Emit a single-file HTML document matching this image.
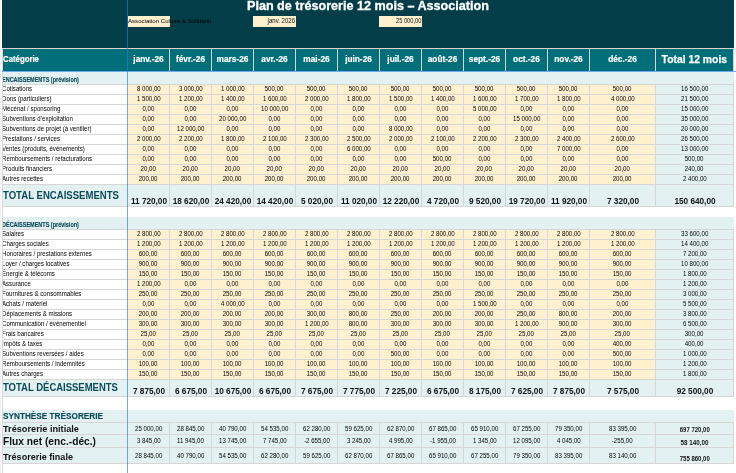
<!DOCTYPE html>
<html><head><meta charset="utf-8"><style>
html,body{margin:0;padding:0;width:736px;height:473px;overflow:hidden;background:#fff}
body{position:relative;font-family:"Liberation Sans",sans-serif}
body div{position:absolute}
.t{white-space:nowrap}
#w{left:0;top:0;width:736px;height:473px;will-change:transform}
</style></head><body><div id="w">
<div style="left:0px;top:0px;width:1px;height:473px;background:#f2f3f6;"></div><div style="left:1px;top:0px;width:1px;height:473px;background:#ffffff;"></div><div style="left:2px;top:0px;width:732px;height:48px;background:#023d48;"></div><div style="left:2px;top:48px;width:732px;height:1px;background:#d9d4d0;"></div><div style="left:2px;top:49px;width:732px;height:22px;background:#006f79;"></div><div style="left:169px;top:49px;width:1px;height:22px;background:#d9d4d0;"></div><div style="left:211px;top:49px;width:1px;height:22px;background:#d9d4d0;"></div><div style="left:253px;top:49px;width:1px;height:22px;background:#d9d4d0;"></div><div style="left:295px;top:49px;width:1px;height:22px;background:#d9d4d0;"></div><div style="left:337px;top:49px;width:1px;height:22px;background:#d9d4d0;"></div><div style="left:379px;top:49px;width:1px;height:22px;background:#d9d4d0;"></div><div style="left:421px;top:49px;width:1px;height:22px;background:#d9d4d0;"></div><div style="left:463px;top:49px;width:1px;height:22px;background:#d9d4d0;"></div><div style="left:505px;top:49px;width:1px;height:22px;background:#d9d4d0;"></div><div style="left:547px;top:49px;width:1px;height:22px;background:#d9d4d0;"></div><div style="left:589px;top:49px;width:1px;height:22px;background:#d9d4d0;"></div><div style="left:655px;top:49px;width:1px;height:22px;background:#d9d4d0;"></div><div style="left:2px;top:49px;width:1px;height:22px;background:#d9d4d0;"></div><div style="left:733px;top:49px;width:1px;height:22px;background:#d9d4d0;"></div><div style="left:2px;top:72px;width:732px;height:12px;background:#e4f1f3;"></div><div style="left:2px;top:84px;width:732px;height:1px;background:#d6d6d6;"></div><div style="left:3px;top:85px;width:124px;height:9px;background:#ffffff;"></div><div style="left:128px;top:85px;width:527px;height:9px;background:#fff1cf;"></div><div style="left:656px;top:85px;width:77px;height:9px;background:#e4f1f3;"></div><div style="left:2px;top:94px;width:732px;height:1px;background:#d6d6d6;"></div><div style="left:3px;top:95px;width:124px;height:9px;background:#ffffff;"></div><div style="left:128px;top:95px;width:527px;height:9px;background:#fff1cf;"></div><div style="left:656px;top:95px;width:77px;height:9px;background:#e4f1f3;"></div><div style="left:2px;top:104px;width:732px;height:1px;background:#d6d6d6;"></div><div style="left:3px;top:105px;width:124px;height:9px;background:#ffffff;"></div><div style="left:128px;top:105px;width:527px;height:9px;background:#fff1cf;"></div><div style="left:656px;top:105px;width:77px;height:9px;background:#e4f1f3;"></div><div style="left:2px;top:114px;width:732px;height:1px;background:#d6d6d6;"></div><div style="left:3px;top:115px;width:124px;height:9px;background:#ffffff;"></div><div style="left:128px;top:115px;width:527px;height:9px;background:#fff1cf;"></div><div style="left:656px;top:115px;width:77px;height:9px;background:#e4f1f3;"></div><div style="left:2px;top:124px;width:732px;height:1px;background:#d6d6d6;"></div><div style="left:3px;top:125px;width:124px;height:9px;background:#ffffff;"></div><div style="left:128px;top:125px;width:527px;height:9px;background:#fff1cf;"></div><div style="left:656px;top:125px;width:77px;height:9px;background:#e4f1f3;"></div><div style="left:2px;top:134px;width:732px;height:1px;background:#d6d6d6;"></div><div style="left:3px;top:135px;width:124px;height:9px;background:#ffffff;"></div><div style="left:128px;top:135px;width:527px;height:9px;background:#fff1cf;"></div><div style="left:656px;top:135px;width:77px;height:9px;background:#e4f1f3;"></div><div style="left:2px;top:144px;width:732px;height:1px;background:#d6d6d6;"></div><div style="left:3px;top:145px;width:124px;height:9px;background:#ffffff;"></div><div style="left:128px;top:145px;width:527px;height:9px;background:#fff1cf;"></div><div style="left:656px;top:145px;width:77px;height:9px;background:#e4f1f3;"></div><div style="left:2px;top:154px;width:732px;height:1px;background:#d6d6d6;"></div><div style="left:3px;top:155px;width:124px;height:9px;background:#ffffff;"></div><div style="left:128px;top:155px;width:527px;height:9px;background:#fff1cf;"></div><div style="left:656px;top:155px;width:77px;height:9px;background:#e4f1f3;"></div><div style="left:2px;top:164px;width:732px;height:1px;background:#d6d6d6;"></div><div style="left:3px;top:165px;width:124px;height:9px;background:#ffffff;"></div><div style="left:128px;top:165px;width:527px;height:9px;background:#fff1cf;"></div><div style="left:656px;top:165px;width:77px;height:9px;background:#e4f1f3;"></div><div style="left:2px;top:174px;width:732px;height:1px;background:#d6d6d6;"></div><div style="left:3px;top:175px;width:124px;height:9px;background:#ffffff;"></div><div style="left:128px;top:175px;width:527px;height:9px;background:#fff1cf;"></div><div style="left:656px;top:175px;width:77px;height:9px;background:#e4f1f3;"></div><div style="left:2px;top:184px;width:732px;height:1px;background:#d6d6d6;"></div><div style="left:169px;top:85px;width:1px;height:100px;background:#d6d6d6;"></div><div style="left:211px;top:85px;width:1px;height:100px;background:#d6d6d6;"></div><div style="left:253px;top:85px;width:1px;height:100px;background:#d6d6d6;"></div><div style="left:295px;top:85px;width:1px;height:100px;background:#d6d6d6;"></div><div style="left:337px;top:85px;width:1px;height:100px;background:#d6d6d6;"></div><div style="left:379px;top:85px;width:1px;height:100px;background:#d6d6d6;"></div><div style="left:421px;top:85px;width:1px;height:100px;background:#d6d6d6;"></div><div style="left:463px;top:85px;width:1px;height:100px;background:#d6d6d6;"></div><div style="left:505px;top:85px;width:1px;height:100px;background:#d6d6d6;"></div><div style="left:547px;top:85px;width:1px;height:100px;background:#d6d6d6;"></div><div style="left:589px;top:85px;width:1px;height:100px;background:#d6d6d6;"></div><div style="left:655px;top:85px;width:1px;height:100px;background:#d6d6d6;"></div><div style="left:733px;top:85px;width:1px;height:100px;background:#d6d6d6;"></div><div style="left:2px;top:84px;width:1px;height:101px;background:#d6d6d6;"></div><div style="left:2px;top:185px;width:732px;height:21px;background:#e4f1f3;"></div><div style="left:2px;top:206px;width:732px;height:1px;background:#d6d6d6;"></div><div style="left:169px;top:185px;width:1px;height:21px;background:#d6d6d6;"></div><div style="left:211px;top:185px;width:1px;height:21px;background:#d6d6d6;"></div><div style="left:253px;top:185px;width:1px;height:21px;background:#d6d6d6;"></div><div style="left:295px;top:185px;width:1px;height:21px;background:#d6d6d6;"></div><div style="left:337px;top:185px;width:1px;height:21px;background:#d6d6d6;"></div><div style="left:379px;top:185px;width:1px;height:21px;background:#d6d6d6;"></div><div style="left:421px;top:185px;width:1px;height:21px;background:#d6d6d6;"></div><div style="left:463px;top:185px;width:1px;height:21px;background:#d6d6d6;"></div><div style="left:505px;top:185px;width:1px;height:21px;background:#d6d6d6;"></div><div style="left:547px;top:185px;width:1px;height:21px;background:#d6d6d6;"></div><div style="left:589px;top:185px;width:1px;height:21px;background:#d6d6d6;"></div><div style="left:655px;top:185px;width:1px;height:21px;background:#d6d6d6;"></div><div style="left:733px;top:185px;width:1px;height:21px;background:#d6d6d6;"></div><div style="left:2px;top:185px;width:1px;height:21px;background:#d6d6d6;"></div><div style="left:2px;top:207px;width:1px;height:10px;background:#d6d6d6;"></div><div style="left:2px;top:217px;width:732px;height:12px;background:#e4f1f3;"></div><div style="left:2px;top:229px;width:732px;height:1px;background:#d6d6d6;"></div><div style="left:3px;top:230px;width:124px;height:9px;background:#ffffff;"></div><div style="left:128px;top:230px;width:527px;height:9px;background:#fff1cf;"></div><div style="left:656px;top:230px;width:77px;height:9px;background:#e4f1f3;"></div><div style="left:2px;top:239px;width:732px;height:1px;background:#d6d6d6;"></div><div style="left:3px;top:240px;width:124px;height:9px;background:#ffffff;"></div><div style="left:128px;top:240px;width:527px;height:9px;background:#fff1cf;"></div><div style="left:656px;top:240px;width:77px;height:9px;background:#e4f1f3;"></div><div style="left:2px;top:249px;width:732px;height:1px;background:#d6d6d6;"></div><div style="left:3px;top:250px;width:124px;height:9px;background:#ffffff;"></div><div style="left:128px;top:250px;width:527px;height:9px;background:#fff1cf;"></div><div style="left:656px;top:250px;width:77px;height:9px;background:#e4f1f3;"></div><div style="left:2px;top:259px;width:732px;height:1px;background:#d6d6d6;"></div><div style="left:3px;top:260px;width:124px;height:9px;background:#ffffff;"></div><div style="left:128px;top:260px;width:527px;height:9px;background:#fff1cf;"></div><div style="left:656px;top:260px;width:77px;height:9px;background:#e4f1f3;"></div><div style="left:2px;top:269px;width:732px;height:1px;background:#d6d6d6;"></div><div style="left:3px;top:270px;width:124px;height:9px;background:#ffffff;"></div><div style="left:128px;top:270px;width:527px;height:9px;background:#fff1cf;"></div><div style="left:656px;top:270px;width:77px;height:9px;background:#e4f1f3;"></div><div style="left:2px;top:279px;width:732px;height:1px;background:#d6d6d6;"></div><div style="left:3px;top:280px;width:124px;height:9px;background:#ffffff;"></div><div style="left:128px;top:280px;width:527px;height:9px;background:#fff1cf;"></div><div style="left:656px;top:280px;width:77px;height:9px;background:#e4f1f3;"></div><div style="left:2px;top:289px;width:732px;height:1px;background:#d6d6d6;"></div><div style="left:3px;top:290px;width:124px;height:9px;background:#ffffff;"></div><div style="left:128px;top:290px;width:527px;height:9px;background:#fff1cf;"></div><div style="left:656px;top:290px;width:77px;height:9px;background:#e4f1f3;"></div><div style="left:2px;top:299px;width:732px;height:1px;background:#d6d6d6;"></div><div style="left:3px;top:300px;width:124px;height:9px;background:#ffffff;"></div><div style="left:128px;top:300px;width:527px;height:9px;background:#fff1cf;"></div><div style="left:656px;top:300px;width:77px;height:9px;background:#e4f1f3;"></div><div style="left:2px;top:309px;width:732px;height:1px;background:#d6d6d6;"></div><div style="left:3px;top:310px;width:124px;height:9px;background:#ffffff;"></div><div style="left:128px;top:310px;width:527px;height:9px;background:#fff1cf;"></div><div style="left:656px;top:310px;width:77px;height:9px;background:#e4f1f3;"></div><div style="left:2px;top:319px;width:732px;height:1px;background:#d6d6d6;"></div><div style="left:3px;top:320px;width:124px;height:9px;background:#ffffff;"></div><div style="left:128px;top:320px;width:527px;height:9px;background:#fff1cf;"></div><div style="left:656px;top:320px;width:77px;height:9px;background:#e4f1f3;"></div><div style="left:2px;top:329px;width:732px;height:1px;background:#d6d6d6;"></div><div style="left:3px;top:330px;width:124px;height:9px;background:#ffffff;"></div><div style="left:128px;top:330px;width:527px;height:9px;background:#fff1cf;"></div><div style="left:656px;top:330px;width:77px;height:9px;background:#e4f1f3;"></div><div style="left:2px;top:339px;width:732px;height:1px;background:#d6d6d6;"></div><div style="left:3px;top:340px;width:124px;height:9px;background:#ffffff;"></div><div style="left:128px;top:340px;width:527px;height:9px;background:#fff1cf;"></div><div style="left:656px;top:340px;width:77px;height:9px;background:#e4f1f3;"></div><div style="left:2px;top:349px;width:732px;height:1px;background:#d6d6d6;"></div><div style="left:3px;top:350px;width:124px;height:9px;background:#ffffff;"></div><div style="left:128px;top:350px;width:527px;height:9px;background:#fff1cf;"></div><div style="left:656px;top:350px;width:77px;height:9px;background:#e4f1f3;"></div><div style="left:2px;top:359px;width:732px;height:1px;background:#d6d6d6;"></div><div style="left:3px;top:360px;width:124px;height:9px;background:#ffffff;"></div><div style="left:128px;top:360px;width:527px;height:9px;background:#fff1cf;"></div><div style="left:656px;top:360px;width:77px;height:9px;background:#e4f1f3;"></div><div style="left:2px;top:369px;width:732px;height:1px;background:#d6d6d6;"></div><div style="left:3px;top:370px;width:124px;height:9px;background:#ffffff;"></div><div style="left:128px;top:370px;width:527px;height:9px;background:#fff1cf;"></div><div style="left:656px;top:370px;width:77px;height:9px;background:#e4f1f3;"></div><div style="left:2px;top:379px;width:732px;height:1px;background:#d6d6d6;"></div><div style="left:169px;top:230px;width:1px;height:150px;background:#d6d6d6;"></div><div style="left:211px;top:230px;width:1px;height:150px;background:#d6d6d6;"></div><div style="left:253px;top:230px;width:1px;height:150px;background:#d6d6d6;"></div><div style="left:295px;top:230px;width:1px;height:150px;background:#d6d6d6;"></div><div style="left:337px;top:230px;width:1px;height:150px;background:#d6d6d6;"></div><div style="left:379px;top:230px;width:1px;height:150px;background:#d6d6d6;"></div><div style="left:421px;top:230px;width:1px;height:150px;background:#d6d6d6;"></div><div style="left:463px;top:230px;width:1px;height:150px;background:#d6d6d6;"></div><div style="left:505px;top:230px;width:1px;height:150px;background:#d6d6d6;"></div><div style="left:547px;top:230px;width:1px;height:150px;background:#d6d6d6;"></div><div style="left:589px;top:230px;width:1px;height:150px;background:#d6d6d6;"></div><div style="left:655px;top:230px;width:1px;height:150px;background:#d6d6d6;"></div><div style="left:733px;top:230px;width:1px;height:150px;background:#d6d6d6;"></div><div style="left:2px;top:229px;width:1px;height:151px;background:#d6d6d6;"></div><div style="left:2px;top:380px;width:732px;height:16px;background:#e4f1f3;"></div><div style="left:2px;top:396px;width:732px;height:1px;background:#d6d6d6;"></div><div style="left:169px;top:380px;width:1px;height:16px;background:#d6d6d6;"></div><div style="left:211px;top:380px;width:1px;height:16px;background:#d6d6d6;"></div><div style="left:253px;top:380px;width:1px;height:16px;background:#d6d6d6;"></div><div style="left:295px;top:380px;width:1px;height:16px;background:#d6d6d6;"></div><div style="left:337px;top:380px;width:1px;height:16px;background:#d6d6d6;"></div><div style="left:379px;top:380px;width:1px;height:16px;background:#d6d6d6;"></div><div style="left:421px;top:380px;width:1px;height:16px;background:#d6d6d6;"></div><div style="left:463px;top:380px;width:1px;height:16px;background:#d6d6d6;"></div><div style="left:505px;top:380px;width:1px;height:16px;background:#d6d6d6;"></div><div style="left:547px;top:380px;width:1px;height:16px;background:#d6d6d6;"></div><div style="left:589px;top:380px;width:1px;height:16px;background:#d6d6d6;"></div><div style="left:655px;top:380px;width:1px;height:16px;background:#d6d6d6;"></div><div style="left:733px;top:380px;width:1px;height:16px;background:#d6d6d6;"></div><div style="left:2px;top:380px;width:1px;height:16px;background:#d6d6d6;"></div><div style="left:2px;top:397px;width:1px;height:13px;background:#d6d6d6;"></div><div style="left:2px;top:410px;width:732px;height:12px;background:#e4f1f3;"></div><div style="left:2px;top:422px;width:732px;height:1px;background:#dad5d5;"></div><div style="left:2px;top:423px;width:732px;height:11px;background:#e4f1f3;"></div><div style="left:2px;top:434px;width:732px;height:1px;background:#dad5d5;"></div><div style="left:2px;top:435px;width:732px;height:12px;background:#e4f1f3;"></div><div style="left:2px;top:447px;width:732px;height:1px;background:#dad5d5;"></div><div style="left:2px;top:448px;width:732px;height:15px;background:#e4f1f3;"></div><div style="left:2px;top:463px;width:732px;height:1px;background:#dad5d5;"></div><div style="left:169px;top:423px;width:1px;height:40px;background:#dad5d5;"></div><div style="left:211px;top:423px;width:1px;height:40px;background:#dad5d5;"></div><div style="left:253px;top:423px;width:1px;height:40px;background:#dad5d5;"></div><div style="left:295px;top:423px;width:1px;height:40px;background:#dad5d5;"></div><div style="left:337px;top:423px;width:1px;height:40px;background:#dad5d5;"></div><div style="left:379px;top:423px;width:1px;height:40px;background:#dad5d5;"></div><div style="left:421px;top:423px;width:1px;height:40px;background:#dad5d5;"></div><div style="left:463px;top:423px;width:1px;height:40px;background:#dad5d5;"></div><div style="left:505px;top:423px;width:1px;height:40px;background:#dad5d5;"></div><div style="left:547px;top:423px;width:1px;height:40px;background:#dad5d5;"></div><div style="left:589px;top:423px;width:1px;height:40px;background:#dad5d5;"></div><div style="left:655px;top:423px;width:1px;height:40px;background:#dad5d5;"></div><div style="left:733px;top:423px;width:1px;height:40px;background:#dad5d5;"></div><div style="left:2px;top:410px;width:1px;height:53px;background:#dad5d5;"></div><div style="left:2px;top:464px;width:1px;height:9px;background:#d6d6d6;"></div><div style="left:128px;top:16px;width:42px;height:11px;background:#fff1cf;"></div><div style="left:253px;top:16px;width:43px;height:11px;background:#fff1cf;"></div><div style="left:379px;top:16px;width:43px;height:11px;background:#fff1cf;"></div><div class="t" style="left:247.00px;top:0px;font-size:12.35px;line-height:12.35px;font-weight:bold;color:#ffffff;transform:scaleX(1.0209);transform-origin:left;-webkit-text-stroke:0.3px #fff;">Plan de trésorerie 12 mois – Association</div><div style="left:128px;top:0;width:83px;height:48px;overflow:hidden"><div class="t" style="left:0.00px;top:18px;font-size:6.2px;line-height:6.2px;color:#000000;transform:scaleX(0.9830);transform-origin:left;">Association Culture &amp; Solidarité</div></div><div class="t" style="left:266.14px;top:18px;font-size:6.4px;line-height:6.4px;color:#111111;transform:scaleX(0.9463);transform-origin:right;">janv. 2026</div><div class="t" style="left:392.73px;top:18px;font-size:6.4px;line-height:6.4px;color:#111111;transform:scaleX(0.8956);transform-origin:right;">25 000,00</div><div class="t" style="left:3.00px;top:56px;font-size:8.2px;line-height:8.2px;font-weight:bold;color:#ffffff;transform:scaleX(0.9518);transform-origin:left;-webkit-text-stroke:0.2px #fff;">Catégorie</div><div class="t" style="left:133.35px;top:55px;font-size:8.3px;line-height:8.3px;font-weight:bold;color:#ffffff;-webkit-text-stroke:0.2px #fff;">janv.-26</div><div class="t" style="left:175.96px;top:55px;font-size:8.3px;line-height:8.3px;font-weight:bold;color:#ffffff;-webkit-text-stroke:0.2px #fff;">févr.-26</div><div class="t" style="left:216.58px;top:55px;font-size:8.3px;line-height:8.3px;font-weight:bold;color:#ffffff;-webkit-text-stroke:0.2px #fff;">mars-26</div><div class="t" style="left:261.35px;top:55px;font-size:8.3px;line-height:8.3px;font-weight:bold;color:#ffffff;-webkit-text-stroke:0.2px #fff;">avr.-26</div><div class="t" style="left:303.35px;top:55px;font-size:8.3px;line-height:8.3px;font-weight:bold;color:#ffffff;-webkit-text-stroke:0.2px #fff;">mai-26</div><div class="t" style="left:345.13px;top:55px;font-size:8.3px;line-height:8.3px;font-weight:bold;color:#ffffff;-webkit-text-stroke:0.2px #fff;">juin-26</div><div class="t" style="left:387.35px;top:55px;font-size:8.3px;line-height:8.3px;font-weight:bold;color:#ffffff;-webkit-text-stroke:0.2px #fff;">juil.-26</div><div class="t" style="left:427.74px;top:55px;font-size:8.3px;line-height:8.3px;font-weight:bold;color:#ffffff;-webkit-text-stroke:0.2px #fff;">août-26</div><div class="t" style="left:468.82px;top:55px;font-size:8.3px;line-height:8.3px;font-weight:bold;color:#ffffff;-webkit-text-stroke:0.2px #fff;">sept.-26</div><div class="t" style="left:513.12px;top:55px;font-size:8.3px;line-height:8.3px;font-weight:bold;color:#ffffff;-webkit-text-stroke:0.2px #fff;">oct.-26</div><div class="t" style="left:554.28px;top:55px;font-size:8.3px;line-height:8.3px;font-weight:bold;color:#ffffff;-webkit-text-stroke:0.2px #fff;">nov.-26</div><div class="t" style="left:608.20px;top:55px;font-size:8.3px;line-height:8.3px;font-weight:bold;color:#ffffff;-webkit-text-stroke:0.2px #fff;">déc.-26</div><div class="t" style="left:658.18px;top:54px;font-size:11.5px;line-height:11.5px;font-weight:bold;color:#ffffff;transform:scaleX(0.9003);transform-origin:center;-webkit-text-stroke:0.25px #fff;">Total 12 mois</div><div class="t" style="left:2.20px;top:77px;font-size:6.6px;line-height:6.6px;font-weight:bold;color:#0b4b58;transform:scaleX(0.8332);transform-origin:left;-webkit-text-stroke:0.15px #0b4b58;">ENCAISSEMENTS (prévision)</div><div class="t" style="left:2.20px;top:222px;font-size:6.6px;line-height:6.6px;font-weight:bold;color:#0b4b58;transform:scaleX(0.8332);transform-origin:left;-webkit-text-stroke:0.15px #0b4b58;">DÉCAISSEMENTS (prévision)</div><div class="t" style="left:2.20px;top:86px;font-size:6.6px;line-height:6.6px;color:#000000;transform:scaleX(0.9250);transform-origin:left;">Cotisations</div><div class="t" style="left:135.65px;top:86px;font-size:6.6px;line-height:6.6px;color:#000000;transform:scaleX(0.9300);transform-origin:center;">8 000,00</div><div class="t" style="left:177.65px;top:86px;font-size:6.6px;line-height:6.6px;color:#000000;transform:scaleX(0.9300);transform-origin:center;">3 000,00</div><div class="t" style="left:219.65px;top:86px;font-size:6.6px;line-height:6.6px;color:#000000;transform:scaleX(0.9300);transform-origin:center;">1 000,00</div><div class="t" style="left:264.41px;top:86px;font-size:6.6px;line-height:6.6px;color:#000000;transform:scaleX(0.9300);transform-origin:center;">500,00</div><div class="t" style="left:306.41px;top:86px;font-size:6.6px;line-height:6.6px;color:#000000;transform:scaleX(0.9300);transform-origin:center;">500,00</div><div class="t" style="left:348.41px;top:86px;font-size:6.6px;line-height:6.6px;color:#000000;transform:scaleX(0.9300);transform-origin:center;">500,00</div><div class="t" style="left:390.41px;top:86px;font-size:6.6px;line-height:6.6px;color:#000000;transform:scaleX(0.9300);transform-origin:center;">500,00</div><div class="t" style="left:432.41px;top:86px;font-size:6.6px;line-height:6.6px;color:#000000;transform:scaleX(0.9300);transform-origin:center;">500,00</div><div class="t" style="left:474.41px;top:86px;font-size:6.6px;line-height:6.6px;color:#000000;transform:scaleX(0.9300);transform-origin:center;">500,00</div><div class="t" style="left:516.41px;top:86px;font-size:6.6px;line-height:6.6px;color:#000000;transform:scaleX(0.9300);transform-origin:center;">500,00</div><div class="t" style="left:558.41px;top:86px;font-size:6.6px;line-height:6.6px;color:#000000;transform:scaleX(0.9300);transform-origin:center;">500,00</div><div class="t" style="left:612.41px;top:86px;font-size:6.6px;line-height:6.6px;color:#000000;transform:scaleX(0.9300);transform-origin:center;">500,00</div><div class="t" style="left:679.82px;top:86px;font-size:6.6px;line-height:6.6px;color:#000000;transform:scaleX(0.9300);transform-origin:center;">16 500,00</div><div class="t" style="left:2.20px;top:96px;font-size:6.6px;line-height:6.6px;color:#000000;transform:scaleX(0.9250);transform-origin:left;">Dons (particuliers)</div><div class="t" style="left:135.65px;top:96px;font-size:6.6px;line-height:6.6px;color:#000000;transform:scaleX(0.9300);transform-origin:center;">1 500,00</div><div class="t" style="left:177.65px;top:96px;font-size:6.6px;line-height:6.6px;color:#000000;transform:scaleX(0.9300);transform-origin:center;">1 200,00</div><div class="t" style="left:219.65px;top:96px;font-size:6.6px;line-height:6.6px;color:#000000;transform:scaleX(0.9300);transform-origin:center;">1 400,00</div><div class="t" style="left:261.65px;top:96px;font-size:6.6px;line-height:6.6px;color:#000000;transform:scaleX(0.9300);transform-origin:center;">1 600,00</div><div class="t" style="left:303.65px;top:96px;font-size:6.6px;line-height:6.6px;color:#000000;transform:scaleX(0.9300);transform-origin:center;">2 000,00</div><div class="t" style="left:345.65px;top:96px;font-size:6.6px;line-height:6.6px;color:#000000;transform:scaleX(0.9300);transform-origin:center;">1 800,00</div><div class="t" style="left:387.65px;top:96px;font-size:6.6px;line-height:6.6px;color:#000000;transform:scaleX(0.9300);transform-origin:center;">1 500,00</div><div class="t" style="left:429.65px;top:96px;font-size:6.6px;line-height:6.6px;color:#000000;transform:scaleX(0.9300);transform-origin:center;">1 400,00</div><div class="t" style="left:471.65px;top:96px;font-size:6.6px;line-height:6.6px;color:#000000;transform:scaleX(0.9300);transform-origin:center;">1 600,00</div><div class="t" style="left:513.65px;top:96px;font-size:6.6px;line-height:6.6px;color:#000000;transform:scaleX(0.9300);transform-origin:center;">1 700,00</div><div class="t" style="left:555.65px;top:96px;font-size:6.6px;line-height:6.6px;color:#000000;transform:scaleX(0.9300);transform-origin:center;">1 800,00</div><div class="t" style="left:609.65px;top:96px;font-size:6.6px;line-height:6.6px;color:#000000;transform:scaleX(0.9300);transform-origin:center;">4 000,00</div><div class="t" style="left:679.82px;top:96px;font-size:6.6px;line-height:6.6px;color:#000000;transform:scaleX(0.9300);transform-origin:center;">21 500,00</div><div class="t" style="left:2.20px;top:106px;font-size:6.6px;line-height:6.6px;color:#000000;transform:scaleX(0.9250);transform-origin:left;">Mécénat / sponsoring</div><div class="t" style="left:142.08px;top:106px;font-size:6.6px;line-height:6.6px;color:#000000;transform:scaleX(0.9300);transform-origin:center;">0,00</div><div class="t" style="left:184.08px;top:106px;font-size:6.6px;line-height:6.6px;color:#000000;transform:scaleX(0.9300);transform-origin:center;">0,00</div><div class="t" style="left:226.08px;top:106px;font-size:6.6px;line-height:6.6px;color:#000000;transform:scaleX(0.9300);transform-origin:center;">0,00</div><div class="t" style="left:259.82px;top:106px;font-size:6.6px;line-height:6.6px;color:#000000;transform:scaleX(0.9300);transform-origin:center;">10 000,00</div><div class="t" style="left:310.08px;top:106px;font-size:6.6px;line-height:6.6px;color:#000000;transform:scaleX(0.9300);transform-origin:center;">0,00</div><div class="t" style="left:352.08px;top:106px;font-size:6.6px;line-height:6.6px;color:#000000;transform:scaleX(0.9300);transform-origin:center;">0,00</div><div class="t" style="left:394.08px;top:106px;font-size:6.6px;line-height:6.6px;color:#000000;transform:scaleX(0.9300);transform-origin:center;">0,00</div><div class="t" style="left:436.08px;top:106px;font-size:6.6px;line-height:6.6px;color:#000000;transform:scaleX(0.9300);transform-origin:center;">0,00</div><div class="t" style="left:471.65px;top:106px;font-size:6.6px;line-height:6.6px;color:#000000;transform:scaleX(0.9300);transform-origin:center;">5 000,00</div><div class="t" style="left:520.08px;top:106px;font-size:6.6px;line-height:6.6px;color:#000000;transform:scaleX(0.9300);transform-origin:center;">0,00</div><div class="t" style="left:562.08px;top:106px;font-size:6.6px;line-height:6.6px;color:#000000;transform:scaleX(0.9300);transform-origin:center;">0,00</div><div class="t" style="left:616.08px;top:106px;font-size:6.6px;line-height:6.6px;color:#000000;transform:scaleX(0.9300);transform-origin:center;">0,00</div><div class="t" style="left:679.82px;top:106px;font-size:6.6px;line-height:6.6px;color:#000000;transform:scaleX(0.9300);transform-origin:center;">15 000,00</div><div class="t" style="left:2.20px;top:116px;font-size:6.6px;line-height:6.6px;color:#000000;transform:scaleX(0.9250);transform-origin:left;">Subventions d’exploitation</div><div class="t" style="left:142.08px;top:116px;font-size:6.6px;line-height:6.6px;color:#000000;transform:scaleX(0.9300);transform-origin:center;">0,00</div><div class="t" style="left:184.08px;top:116px;font-size:6.6px;line-height:6.6px;color:#000000;transform:scaleX(0.9300);transform-origin:center;">0,00</div><div class="t" style="left:217.82px;top:116px;font-size:6.6px;line-height:6.6px;color:#000000;transform:scaleX(0.9300);transform-origin:center;">20 000,00</div><div class="t" style="left:268.08px;top:116px;font-size:6.6px;line-height:6.6px;color:#000000;transform:scaleX(0.9300);transform-origin:center;">0,00</div><div class="t" style="left:310.08px;top:116px;font-size:6.6px;line-height:6.6px;color:#000000;transform:scaleX(0.9300);transform-origin:center;">0,00</div><div class="t" style="left:352.08px;top:116px;font-size:6.6px;line-height:6.6px;color:#000000;transform:scaleX(0.9300);transform-origin:center;">0,00</div><div class="t" style="left:394.08px;top:116px;font-size:6.6px;line-height:6.6px;color:#000000;transform:scaleX(0.9300);transform-origin:center;">0,00</div><div class="t" style="left:436.08px;top:116px;font-size:6.6px;line-height:6.6px;color:#000000;transform:scaleX(0.9300);transform-origin:center;">0,00</div><div class="t" style="left:478.08px;top:116px;font-size:6.6px;line-height:6.6px;color:#000000;transform:scaleX(0.9300);transform-origin:center;">0,00</div><div class="t" style="left:511.82px;top:116px;font-size:6.6px;line-height:6.6px;color:#000000;transform:scaleX(0.9300);transform-origin:center;">15 000,00</div><div class="t" style="left:562.08px;top:116px;font-size:6.6px;line-height:6.6px;color:#000000;transform:scaleX(0.9300);transform-origin:center;">0,00</div><div class="t" style="left:616.08px;top:116px;font-size:6.6px;line-height:6.6px;color:#000000;transform:scaleX(0.9300);transform-origin:center;">0,00</div><div class="t" style="left:679.82px;top:116px;font-size:6.6px;line-height:6.6px;color:#000000;transform:scaleX(0.9300);transform-origin:center;">35 000,00</div><div class="t" style="left:2.20px;top:126px;font-size:6.6px;line-height:6.6px;color:#000000;transform:scaleX(0.9250);transform-origin:left;">Subventions de projet (à ventiler)</div><div class="t" style="left:142.08px;top:126px;font-size:6.6px;line-height:6.6px;color:#000000;transform:scaleX(0.9300);transform-origin:center;">0,00</div><div class="t" style="left:175.82px;top:126px;font-size:6.6px;line-height:6.6px;color:#000000;transform:scaleX(0.9300);transform-origin:center;">12 000,00</div><div class="t" style="left:226.08px;top:126px;font-size:6.6px;line-height:6.6px;color:#000000;transform:scaleX(0.9300);transform-origin:center;">0,00</div><div class="t" style="left:268.08px;top:126px;font-size:6.6px;line-height:6.6px;color:#000000;transform:scaleX(0.9300);transform-origin:center;">0,00</div><div class="t" style="left:310.08px;top:126px;font-size:6.6px;line-height:6.6px;color:#000000;transform:scaleX(0.9300);transform-origin:center;">0,00</div><div class="t" style="left:352.08px;top:126px;font-size:6.6px;line-height:6.6px;color:#000000;transform:scaleX(0.9300);transform-origin:center;">0,00</div><div class="t" style="left:387.65px;top:126px;font-size:6.6px;line-height:6.6px;color:#000000;transform:scaleX(0.9300);transform-origin:center;">8 000,00</div><div class="t" style="left:436.08px;top:126px;font-size:6.6px;line-height:6.6px;color:#000000;transform:scaleX(0.9300);transform-origin:center;">0,00</div><div class="t" style="left:478.08px;top:126px;font-size:6.6px;line-height:6.6px;color:#000000;transform:scaleX(0.9300);transform-origin:center;">0,00</div><div class="t" style="left:520.08px;top:126px;font-size:6.6px;line-height:6.6px;color:#000000;transform:scaleX(0.9300);transform-origin:center;">0,00</div><div class="t" style="left:562.08px;top:126px;font-size:6.6px;line-height:6.6px;color:#000000;transform:scaleX(0.9300);transform-origin:center;">0,00</div><div class="t" style="left:616.08px;top:126px;font-size:6.6px;line-height:6.6px;color:#000000;transform:scaleX(0.9300);transform-origin:center;">0,00</div><div class="t" style="left:679.82px;top:126px;font-size:6.6px;line-height:6.6px;color:#000000;transform:scaleX(0.9300);transform-origin:center;">20 000,00</div><div class="t" style="left:2.20px;top:136px;font-size:6.6px;line-height:6.6px;color:#000000;transform:scaleX(0.9250);transform-origin:left;">Prestations / services</div><div class="t" style="left:135.65px;top:136px;font-size:6.6px;line-height:6.6px;color:#000000;transform:scaleX(0.9300);transform-origin:center;">2 000,00</div><div class="t" style="left:177.65px;top:136px;font-size:6.6px;line-height:6.6px;color:#000000;transform:scaleX(0.9300);transform-origin:center;">2 200,00</div><div class="t" style="left:219.65px;top:136px;font-size:6.6px;line-height:6.6px;color:#000000;transform:scaleX(0.9300);transform-origin:center;">1 800,00</div><div class="t" style="left:261.65px;top:136px;font-size:6.6px;line-height:6.6px;color:#000000;transform:scaleX(0.9300);transform-origin:center;">2 100,00</div><div class="t" style="left:303.65px;top:136px;font-size:6.6px;line-height:6.6px;color:#000000;transform:scaleX(0.9300);transform-origin:center;">2 300,00</div><div class="t" style="left:345.65px;top:136px;font-size:6.6px;line-height:6.6px;color:#000000;transform:scaleX(0.9300);transform-origin:center;">2 500,00</div><div class="t" style="left:387.65px;top:136px;font-size:6.6px;line-height:6.6px;color:#000000;transform:scaleX(0.9300);transform-origin:center;">2 000,00</div><div class="t" style="left:429.65px;top:136px;font-size:6.6px;line-height:6.6px;color:#000000;transform:scaleX(0.9300);transform-origin:center;">2 100,00</div><div class="t" style="left:471.65px;top:136px;font-size:6.6px;line-height:6.6px;color:#000000;transform:scaleX(0.9300);transform-origin:center;">2 200,00</div><div class="t" style="left:513.65px;top:136px;font-size:6.6px;line-height:6.6px;color:#000000;transform:scaleX(0.9300);transform-origin:center;">2 300,00</div><div class="t" style="left:555.65px;top:136px;font-size:6.6px;line-height:6.6px;color:#000000;transform:scaleX(0.9300);transform-origin:center;">2 400,00</div><div class="t" style="left:609.65px;top:136px;font-size:6.6px;line-height:6.6px;color:#000000;transform:scaleX(0.9300);transform-origin:center;">2 600,00</div><div class="t" style="left:679.82px;top:136px;font-size:6.6px;line-height:6.6px;color:#000000;transform:scaleX(0.9300);transform-origin:center;">26 500,00</div><div class="t" style="left:2.20px;top:146px;font-size:6.6px;line-height:6.6px;color:#000000;transform:scaleX(0.9250);transform-origin:left;">Ventes (produits, événements)</div><div class="t" style="left:142.08px;top:146px;font-size:6.6px;line-height:6.6px;color:#000000;transform:scaleX(0.9300);transform-origin:center;">0,00</div><div class="t" style="left:184.08px;top:146px;font-size:6.6px;line-height:6.6px;color:#000000;transform:scaleX(0.9300);transform-origin:center;">0,00</div><div class="t" style="left:226.08px;top:146px;font-size:6.6px;line-height:6.6px;color:#000000;transform:scaleX(0.9300);transform-origin:center;">0,00</div><div class="t" style="left:268.08px;top:146px;font-size:6.6px;line-height:6.6px;color:#000000;transform:scaleX(0.9300);transform-origin:center;">0,00</div><div class="t" style="left:310.08px;top:146px;font-size:6.6px;line-height:6.6px;color:#000000;transform:scaleX(0.9300);transform-origin:center;">0,00</div><div class="t" style="left:345.65px;top:146px;font-size:6.6px;line-height:6.6px;color:#000000;transform:scaleX(0.9300);transform-origin:center;">6 000,00</div><div class="t" style="left:394.08px;top:146px;font-size:6.6px;line-height:6.6px;color:#000000;transform:scaleX(0.9300);transform-origin:center;">0,00</div><div class="t" style="left:436.08px;top:146px;font-size:6.6px;line-height:6.6px;color:#000000;transform:scaleX(0.9300);transform-origin:center;">0,00</div><div class="t" style="left:478.08px;top:146px;font-size:6.6px;line-height:6.6px;color:#000000;transform:scaleX(0.9300);transform-origin:center;">0,00</div><div class="t" style="left:520.08px;top:146px;font-size:6.6px;line-height:6.6px;color:#000000;transform:scaleX(0.9300);transform-origin:center;">0,00</div><div class="t" style="left:555.65px;top:146px;font-size:6.6px;line-height:6.6px;color:#000000;transform:scaleX(0.9300);transform-origin:center;">7 000,00</div><div class="t" style="left:616.08px;top:146px;font-size:6.6px;line-height:6.6px;color:#000000;transform:scaleX(0.9300);transform-origin:center;">0,00</div><div class="t" style="left:679.82px;top:146px;font-size:6.6px;line-height:6.6px;color:#000000;transform:scaleX(0.9300);transform-origin:center;">13 000,00</div><div class="t" style="left:2.20px;top:156px;font-size:6.6px;line-height:6.6px;color:#000000;transform:scaleX(0.9250);transform-origin:left;">Remboursements / refacturations</div><div class="t" style="left:142.08px;top:156px;font-size:6.6px;line-height:6.6px;color:#000000;transform:scaleX(0.9300);transform-origin:center;">0,00</div><div class="t" style="left:184.08px;top:156px;font-size:6.6px;line-height:6.6px;color:#000000;transform:scaleX(0.9300);transform-origin:center;">0,00</div><div class="t" style="left:226.08px;top:156px;font-size:6.6px;line-height:6.6px;color:#000000;transform:scaleX(0.9300);transform-origin:center;">0,00</div><div class="t" style="left:268.08px;top:156px;font-size:6.6px;line-height:6.6px;color:#000000;transform:scaleX(0.9300);transform-origin:center;">0,00</div><div class="t" style="left:310.08px;top:156px;font-size:6.6px;line-height:6.6px;color:#000000;transform:scaleX(0.9300);transform-origin:center;">0,00</div><div class="t" style="left:352.08px;top:156px;font-size:6.6px;line-height:6.6px;color:#000000;transform:scaleX(0.9300);transform-origin:center;">0,00</div><div class="t" style="left:394.08px;top:156px;font-size:6.6px;line-height:6.6px;color:#000000;transform:scaleX(0.9300);transform-origin:center;">0,00</div><div class="t" style="left:432.41px;top:156px;font-size:6.6px;line-height:6.6px;color:#000000;transform:scaleX(0.9300);transform-origin:center;">500,00</div><div class="t" style="left:478.08px;top:156px;font-size:6.6px;line-height:6.6px;color:#000000;transform:scaleX(0.9300);transform-origin:center;">0,00</div><div class="t" style="left:520.08px;top:156px;font-size:6.6px;line-height:6.6px;color:#000000;transform:scaleX(0.9300);transform-origin:center;">0,00</div><div class="t" style="left:562.08px;top:156px;font-size:6.6px;line-height:6.6px;color:#000000;transform:scaleX(0.9300);transform-origin:center;">0,00</div><div class="t" style="left:616.08px;top:156px;font-size:6.6px;line-height:6.6px;color:#000000;transform:scaleX(0.9300);transform-origin:center;">0,00</div><div class="t" style="left:684.41px;top:156px;font-size:6.6px;line-height:6.6px;color:#000000;transform:scaleX(0.9300);transform-origin:center;">500,00</div><div class="t" style="left:2.20px;top:166px;font-size:6.6px;line-height:6.6px;color:#000000;transform:scaleX(0.9250);transform-origin:left;">Produits financiers</div><div class="t" style="left:140.24px;top:166px;font-size:6.6px;line-height:6.6px;color:#000000;transform:scaleX(0.9300);transform-origin:center;">20,00</div><div class="t" style="left:182.24px;top:166px;font-size:6.6px;line-height:6.6px;color:#000000;transform:scaleX(0.9300);transform-origin:center;">20,00</div><div class="t" style="left:224.24px;top:166px;font-size:6.6px;line-height:6.6px;color:#000000;transform:scaleX(0.9300);transform-origin:center;">20,00</div><div class="t" style="left:266.24px;top:166px;font-size:6.6px;line-height:6.6px;color:#000000;transform:scaleX(0.9300);transform-origin:center;">20,00</div><div class="t" style="left:308.24px;top:166px;font-size:6.6px;line-height:6.6px;color:#000000;transform:scaleX(0.9300);transform-origin:center;">20,00</div><div class="t" style="left:350.24px;top:166px;font-size:6.6px;line-height:6.6px;color:#000000;transform:scaleX(0.9300);transform-origin:center;">20,00</div><div class="t" style="left:392.24px;top:166px;font-size:6.6px;line-height:6.6px;color:#000000;transform:scaleX(0.9300);transform-origin:center;">20,00</div><div class="t" style="left:434.24px;top:166px;font-size:6.6px;line-height:6.6px;color:#000000;transform:scaleX(0.9300);transform-origin:center;">20,00</div><div class="t" style="left:476.24px;top:166px;font-size:6.6px;line-height:6.6px;color:#000000;transform:scaleX(0.9300);transform-origin:center;">20,00</div><div class="t" style="left:518.24px;top:166px;font-size:6.6px;line-height:6.6px;color:#000000;transform:scaleX(0.9300);transform-origin:center;">20,00</div><div class="t" style="left:560.24px;top:166px;font-size:6.6px;line-height:6.6px;color:#000000;transform:scaleX(0.9300);transform-origin:center;">20,00</div><div class="t" style="left:614.24px;top:166px;font-size:6.6px;line-height:6.6px;color:#000000;transform:scaleX(0.9300);transform-origin:center;">20,00</div><div class="t" style="left:684.41px;top:166px;font-size:6.6px;line-height:6.6px;color:#000000;transform:scaleX(0.9300);transform-origin:center;">240,00</div><div class="t" style="left:2.20px;top:176px;font-size:6.6px;line-height:6.6px;color:#000000;transform:scaleX(0.9250);transform-origin:left;">Autres recettes</div><div class="t" style="left:138.41px;top:176px;font-size:6.6px;line-height:6.6px;color:#000000;transform:scaleX(0.9300);transform-origin:center;">200,00</div><div class="t" style="left:180.41px;top:176px;font-size:6.6px;line-height:6.6px;color:#000000;transform:scaleX(0.9300);transform-origin:center;">200,00</div><div class="t" style="left:222.41px;top:176px;font-size:6.6px;line-height:6.6px;color:#000000;transform:scaleX(0.9300);transform-origin:center;">200,00</div><div class="t" style="left:264.41px;top:176px;font-size:6.6px;line-height:6.6px;color:#000000;transform:scaleX(0.9300);transform-origin:center;">200,00</div><div class="t" style="left:306.41px;top:176px;font-size:6.6px;line-height:6.6px;color:#000000;transform:scaleX(0.9300);transform-origin:center;">200,00</div><div class="t" style="left:348.41px;top:176px;font-size:6.6px;line-height:6.6px;color:#000000;transform:scaleX(0.9300);transform-origin:center;">200,00</div><div class="t" style="left:390.41px;top:176px;font-size:6.6px;line-height:6.6px;color:#000000;transform:scaleX(0.9300);transform-origin:center;">200,00</div><div class="t" style="left:432.41px;top:176px;font-size:6.6px;line-height:6.6px;color:#000000;transform:scaleX(0.9300);transform-origin:center;">200,00</div><div class="t" style="left:474.41px;top:176px;font-size:6.6px;line-height:6.6px;color:#000000;transform:scaleX(0.9300);transform-origin:center;">200,00</div><div class="t" style="left:516.41px;top:176px;font-size:6.6px;line-height:6.6px;color:#000000;transform:scaleX(0.9300);transform-origin:center;">200,00</div><div class="t" style="left:558.41px;top:176px;font-size:6.6px;line-height:6.6px;color:#000000;transform:scaleX(0.9300);transform-origin:center;">200,00</div><div class="t" style="left:612.41px;top:176px;font-size:6.6px;line-height:6.6px;color:#000000;transform:scaleX(0.9300);transform-origin:center;">200,00</div><div class="t" style="left:681.65px;top:176px;font-size:6.6px;line-height:6.6px;color:#000000;transform:scaleX(0.9300);transform-origin:center;">2 400,00</div><div class="t" style="left:2.20px;top:231px;font-size:6.6px;line-height:6.6px;color:#000000;transform:scaleX(0.9250);transform-origin:left;">Salaires</div><div class="t" style="left:135.65px;top:231px;font-size:6.6px;line-height:6.6px;color:#000000;transform:scaleX(0.9300);transform-origin:center;">2 800,00</div><div class="t" style="left:177.65px;top:231px;font-size:6.6px;line-height:6.6px;color:#000000;transform:scaleX(0.9300);transform-origin:center;">2 800,00</div><div class="t" style="left:219.65px;top:231px;font-size:6.6px;line-height:6.6px;color:#000000;transform:scaleX(0.9300);transform-origin:center;">2 800,00</div><div class="t" style="left:261.65px;top:231px;font-size:6.6px;line-height:6.6px;color:#000000;transform:scaleX(0.9300);transform-origin:center;">2 800,00</div><div class="t" style="left:303.65px;top:231px;font-size:6.6px;line-height:6.6px;color:#000000;transform:scaleX(0.9300);transform-origin:center;">2 800,00</div><div class="t" style="left:345.65px;top:231px;font-size:6.6px;line-height:6.6px;color:#000000;transform:scaleX(0.9300);transform-origin:center;">2 800,00</div><div class="t" style="left:387.65px;top:231px;font-size:6.6px;line-height:6.6px;color:#000000;transform:scaleX(0.9300);transform-origin:center;">2 800,00</div><div class="t" style="left:429.65px;top:231px;font-size:6.6px;line-height:6.6px;color:#000000;transform:scaleX(0.9300);transform-origin:center;">2 800,00</div><div class="t" style="left:471.65px;top:231px;font-size:6.6px;line-height:6.6px;color:#000000;transform:scaleX(0.9300);transform-origin:center;">2 800,00</div><div class="t" style="left:513.65px;top:231px;font-size:6.6px;line-height:6.6px;color:#000000;transform:scaleX(0.9300);transform-origin:center;">2 800,00</div><div class="t" style="left:555.65px;top:231px;font-size:6.6px;line-height:6.6px;color:#000000;transform:scaleX(0.9300);transform-origin:center;">2 800,00</div><div class="t" style="left:609.65px;top:231px;font-size:6.6px;line-height:6.6px;color:#000000;transform:scaleX(0.9300);transform-origin:center;">2 800,00</div><div class="t" style="left:679.82px;top:231px;font-size:6.6px;line-height:6.6px;color:#000000;transform:scaleX(0.9300);transform-origin:center;">33 600,00</div><div class="t" style="left:2.20px;top:241px;font-size:6.6px;line-height:6.6px;color:#000000;transform:scaleX(0.9250);transform-origin:left;">Charges sociales</div><div class="t" style="left:135.65px;top:241px;font-size:6.6px;line-height:6.6px;color:#000000;transform:scaleX(0.9300);transform-origin:center;">1 200,00</div><div class="t" style="left:177.65px;top:241px;font-size:6.6px;line-height:6.6px;color:#000000;transform:scaleX(0.9300);transform-origin:center;">1 200,00</div><div class="t" style="left:219.65px;top:241px;font-size:6.6px;line-height:6.6px;color:#000000;transform:scaleX(0.9300);transform-origin:center;">1 200,00</div><div class="t" style="left:261.65px;top:241px;font-size:6.6px;line-height:6.6px;color:#000000;transform:scaleX(0.9300);transform-origin:center;">1 200,00</div><div class="t" style="left:303.65px;top:241px;font-size:6.6px;line-height:6.6px;color:#000000;transform:scaleX(0.9300);transform-origin:center;">1 200,00</div><div class="t" style="left:345.65px;top:241px;font-size:6.6px;line-height:6.6px;color:#000000;transform:scaleX(0.9300);transform-origin:center;">1 200,00</div><div class="t" style="left:387.65px;top:241px;font-size:6.6px;line-height:6.6px;color:#000000;transform:scaleX(0.9300);transform-origin:center;">1 200,00</div><div class="t" style="left:429.65px;top:241px;font-size:6.6px;line-height:6.6px;color:#000000;transform:scaleX(0.9300);transform-origin:center;">1 200,00</div><div class="t" style="left:471.65px;top:241px;font-size:6.6px;line-height:6.6px;color:#000000;transform:scaleX(0.9300);transform-origin:center;">1 200,00</div><div class="t" style="left:513.65px;top:241px;font-size:6.6px;line-height:6.6px;color:#000000;transform:scaleX(0.9300);transform-origin:center;">1 200,00</div><div class="t" style="left:555.65px;top:241px;font-size:6.6px;line-height:6.6px;color:#000000;transform:scaleX(0.9300);transform-origin:center;">1 200,00</div><div class="t" style="left:609.65px;top:241px;font-size:6.6px;line-height:6.6px;color:#000000;transform:scaleX(0.9300);transform-origin:center;">1 200,00</div><div class="t" style="left:679.82px;top:241px;font-size:6.6px;line-height:6.6px;color:#000000;transform:scaleX(0.9300);transform-origin:center;">14 400,00</div><div class="t" style="left:2.20px;top:251px;font-size:6.6px;line-height:6.6px;color:#000000;transform:scaleX(0.9250);transform-origin:left;">Honoraires / prestations externes</div><div class="t" style="left:138.41px;top:251px;font-size:6.6px;line-height:6.6px;color:#000000;transform:scaleX(0.9300);transform-origin:center;">600,00</div><div class="t" style="left:180.41px;top:251px;font-size:6.6px;line-height:6.6px;color:#000000;transform:scaleX(0.9300);transform-origin:center;">600,00</div><div class="t" style="left:222.41px;top:251px;font-size:6.6px;line-height:6.6px;color:#000000;transform:scaleX(0.9300);transform-origin:center;">600,00</div><div class="t" style="left:264.41px;top:251px;font-size:6.6px;line-height:6.6px;color:#000000;transform:scaleX(0.9300);transform-origin:center;">600,00</div><div class="t" style="left:306.41px;top:251px;font-size:6.6px;line-height:6.6px;color:#000000;transform:scaleX(0.9300);transform-origin:center;">600,00</div><div class="t" style="left:348.41px;top:251px;font-size:6.6px;line-height:6.6px;color:#000000;transform:scaleX(0.9300);transform-origin:center;">600,00</div><div class="t" style="left:390.41px;top:251px;font-size:6.6px;line-height:6.6px;color:#000000;transform:scaleX(0.9300);transform-origin:center;">600,00</div><div class="t" style="left:432.41px;top:251px;font-size:6.6px;line-height:6.6px;color:#000000;transform:scaleX(0.9300);transform-origin:center;">600,00</div><div class="t" style="left:474.41px;top:251px;font-size:6.6px;line-height:6.6px;color:#000000;transform:scaleX(0.9300);transform-origin:center;">600,00</div><div class="t" style="left:516.41px;top:251px;font-size:6.6px;line-height:6.6px;color:#000000;transform:scaleX(0.9300);transform-origin:center;">600,00</div><div class="t" style="left:558.41px;top:251px;font-size:6.6px;line-height:6.6px;color:#000000;transform:scaleX(0.9300);transform-origin:center;">600,00</div><div class="t" style="left:612.41px;top:251px;font-size:6.6px;line-height:6.6px;color:#000000;transform:scaleX(0.9300);transform-origin:center;">600,00</div><div class="t" style="left:681.65px;top:251px;font-size:6.6px;line-height:6.6px;color:#000000;transform:scaleX(0.9300);transform-origin:center;">7 200,00</div><div class="t" style="left:2.20px;top:261px;font-size:6.6px;line-height:6.6px;color:#000000;transform:scaleX(0.9250);transform-origin:left;">Loyer / charges locatives</div><div class="t" style="left:138.41px;top:261px;font-size:6.6px;line-height:6.6px;color:#000000;transform:scaleX(0.9300);transform-origin:center;">900,00</div><div class="t" style="left:180.41px;top:261px;font-size:6.6px;line-height:6.6px;color:#000000;transform:scaleX(0.9300);transform-origin:center;">900,00</div><div class="t" style="left:222.41px;top:261px;font-size:6.6px;line-height:6.6px;color:#000000;transform:scaleX(0.9300);transform-origin:center;">900,00</div><div class="t" style="left:264.41px;top:261px;font-size:6.6px;line-height:6.6px;color:#000000;transform:scaleX(0.9300);transform-origin:center;">900,00</div><div class="t" style="left:306.41px;top:261px;font-size:6.6px;line-height:6.6px;color:#000000;transform:scaleX(0.9300);transform-origin:center;">900,00</div><div class="t" style="left:348.41px;top:261px;font-size:6.6px;line-height:6.6px;color:#000000;transform:scaleX(0.9300);transform-origin:center;">900,00</div><div class="t" style="left:390.41px;top:261px;font-size:6.6px;line-height:6.6px;color:#000000;transform:scaleX(0.9300);transform-origin:center;">900,00</div><div class="t" style="left:432.41px;top:261px;font-size:6.6px;line-height:6.6px;color:#000000;transform:scaleX(0.9300);transform-origin:center;">900,00</div><div class="t" style="left:474.41px;top:261px;font-size:6.6px;line-height:6.6px;color:#000000;transform:scaleX(0.9300);transform-origin:center;">900,00</div><div class="t" style="left:516.41px;top:261px;font-size:6.6px;line-height:6.6px;color:#000000;transform:scaleX(0.9300);transform-origin:center;">900,00</div><div class="t" style="left:558.41px;top:261px;font-size:6.6px;line-height:6.6px;color:#000000;transform:scaleX(0.9300);transform-origin:center;">900,00</div><div class="t" style="left:612.41px;top:261px;font-size:6.6px;line-height:6.6px;color:#000000;transform:scaleX(0.9300);transform-origin:center;">900,00</div><div class="t" style="left:679.82px;top:261px;font-size:6.6px;line-height:6.6px;color:#000000;transform:scaleX(0.9300);transform-origin:center;">10 800,00</div><div class="t" style="left:2.20px;top:271px;font-size:6.6px;line-height:6.6px;color:#000000;transform:scaleX(0.9250);transform-origin:left;">Énergie &amp; télécoms</div><div class="t" style="left:138.41px;top:271px;font-size:6.6px;line-height:6.6px;color:#000000;transform:scaleX(0.9300);transform-origin:center;">150,00</div><div class="t" style="left:180.41px;top:271px;font-size:6.6px;line-height:6.6px;color:#000000;transform:scaleX(0.9300);transform-origin:center;">150,00</div><div class="t" style="left:222.41px;top:271px;font-size:6.6px;line-height:6.6px;color:#000000;transform:scaleX(0.9300);transform-origin:center;">150,00</div><div class="t" style="left:264.41px;top:271px;font-size:6.6px;line-height:6.6px;color:#000000;transform:scaleX(0.9300);transform-origin:center;">150,00</div><div class="t" style="left:306.41px;top:271px;font-size:6.6px;line-height:6.6px;color:#000000;transform:scaleX(0.9300);transform-origin:center;">150,00</div><div class="t" style="left:348.41px;top:271px;font-size:6.6px;line-height:6.6px;color:#000000;transform:scaleX(0.9300);transform-origin:center;">150,00</div><div class="t" style="left:390.41px;top:271px;font-size:6.6px;line-height:6.6px;color:#000000;transform:scaleX(0.9300);transform-origin:center;">150,00</div><div class="t" style="left:432.41px;top:271px;font-size:6.6px;line-height:6.6px;color:#000000;transform:scaleX(0.9300);transform-origin:center;">150,00</div><div class="t" style="left:474.41px;top:271px;font-size:6.6px;line-height:6.6px;color:#000000;transform:scaleX(0.9300);transform-origin:center;">150,00</div><div class="t" style="left:516.41px;top:271px;font-size:6.6px;line-height:6.6px;color:#000000;transform:scaleX(0.9300);transform-origin:center;">150,00</div><div class="t" style="left:558.41px;top:271px;font-size:6.6px;line-height:6.6px;color:#000000;transform:scaleX(0.9300);transform-origin:center;">150,00</div><div class="t" style="left:612.41px;top:271px;font-size:6.6px;line-height:6.6px;color:#000000;transform:scaleX(0.9300);transform-origin:center;">150,00</div><div class="t" style="left:681.65px;top:271px;font-size:6.6px;line-height:6.6px;color:#000000;transform:scaleX(0.9300);transform-origin:center;">1 800,00</div><div class="t" style="left:2.20px;top:281px;font-size:6.6px;line-height:6.6px;color:#000000;transform:scaleX(0.9250);transform-origin:left;">Assurance</div><div class="t" style="left:135.65px;top:281px;font-size:6.6px;line-height:6.6px;color:#000000;transform:scaleX(0.9300);transform-origin:center;">1 200,00</div><div class="t" style="left:184.08px;top:281px;font-size:6.6px;line-height:6.6px;color:#000000;transform:scaleX(0.9300);transform-origin:center;">0,00</div><div class="t" style="left:226.08px;top:281px;font-size:6.6px;line-height:6.6px;color:#000000;transform:scaleX(0.9300);transform-origin:center;">0,00</div><div class="t" style="left:268.08px;top:281px;font-size:6.6px;line-height:6.6px;color:#000000;transform:scaleX(0.9300);transform-origin:center;">0,00</div><div class="t" style="left:310.08px;top:281px;font-size:6.6px;line-height:6.6px;color:#000000;transform:scaleX(0.9300);transform-origin:center;">0,00</div><div class="t" style="left:352.08px;top:281px;font-size:6.6px;line-height:6.6px;color:#000000;transform:scaleX(0.9300);transform-origin:center;">0,00</div><div class="t" style="left:394.08px;top:281px;font-size:6.6px;line-height:6.6px;color:#000000;transform:scaleX(0.9300);transform-origin:center;">0,00</div><div class="t" style="left:436.08px;top:281px;font-size:6.6px;line-height:6.6px;color:#000000;transform:scaleX(0.9300);transform-origin:center;">0,00</div><div class="t" style="left:478.08px;top:281px;font-size:6.6px;line-height:6.6px;color:#000000;transform:scaleX(0.9300);transform-origin:center;">0,00</div><div class="t" style="left:520.08px;top:281px;font-size:6.6px;line-height:6.6px;color:#000000;transform:scaleX(0.9300);transform-origin:center;">0,00</div><div class="t" style="left:562.08px;top:281px;font-size:6.6px;line-height:6.6px;color:#000000;transform:scaleX(0.9300);transform-origin:center;">0,00</div><div class="t" style="left:616.08px;top:281px;font-size:6.6px;line-height:6.6px;color:#000000;transform:scaleX(0.9300);transform-origin:center;">0,00</div><div class="t" style="left:681.65px;top:281px;font-size:6.6px;line-height:6.6px;color:#000000;transform:scaleX(0.9300);transform-origin:center;">1 200,00</div><div class="t" style="left:2.20px;top:291px;font-size:6.6px;line-height:6.6px;color:#000000;transform:scaleX(0.9250);transform-origin:left;">Fournitures &amp; consommables</div><div class="t" style="left:138.41px;top:291px;font-size:6.6px;line-height:6.6px;color:#000000;transform:scaleX(0.9300);transform-origin:center;">250,00</div><div class="t" style="left:180.41px;top:291px;font-size:6.6px;line-height:6.6px;color:#000000;transform:scaleX(0.9300);transform-origin:center;">250,00</div><div class="t" style="left:222.41px;top:291px;font-size:6.6px;line-height:6.6px;color:#000000;transform:scaleX(0.9300);transform-origin:center;">250,00</div><div class="t" style="left:264.41px;top:291px;font-size:6.6px;line-height:6.6px;color:#000000;transform:scaleX(0.9300);transform-origin:center;">250,00</div><div class="t" style="left:306.41px;top:291px;font-size:6.6px;line-height:6.6px;color:#000000;transform:scaleX(0.9300);transform-origin:center;">250,00</div><div class="t" style="left:348.41px;top:291px;font-size:6.6px;line-height:6.6px;color:#000000;transform:scaleX(0.9300);transform-origin:center;">250,00</div><div class="t" style="left:390.41px;top:291px;font-size:6.6px;line-height:6.6px;color:#000000;transform:scaleX(0.9300);transform-origin:center;">250,00</div><div class="t" style="left:432.41px;top:291px;font-size:6.6px;line-height:6.6px;color:#000000;transform:scaleX(0.9300);transform-origin:center;">250,00</div><div class="t" style="left:474.41px;top:291px;font-size:6.6px;line-height:6.6px;color:#000000;transform:scaleX(0.9300);transform-origin:center;">250,00</div><div class="t" style="left:516.41px;top:291px;font-size:6.6px;line-height:6.6px;color:#000000;transform:scaleX(0.9300);transform-origin:center;">250,00</div><div class="t" style="left:558.41px;top:291px;font-size:6.6px;line-height:6.6px;color:#000000;transform:scaleX(0.9300);transform-origin:center;">250,00</div><div class="t" style="left:612.41px;top:291px;font-size:6.6px;line-height:6.6px;color:#000000;transform:scaleX(0.9300);transform-origin:center;">250,00</div><div class="t" style="left:681.65px;top:291px;font-size:6.6px;line-height:6.6px;color:#000000;transform:scaleX(0.9300);transform-origin:center;">3 000,00</div><div class="t" style="left:2.20px;top:301px;font-size:6.6px;line-height:6.6px;color:#000000;transform:scaleX(0.9250);transform-origin:left;">Achats / matériel</div><div class="t" style="left:142.08px;top:301px;font-size:6.6px;line-height:6.6px;color:#000000;transform:scaleX(0.9300);transform-origin:center;">0,00</div><div class="t" style="left:184.08px;top:301px;font-size:6.6px;line-height:6.6px;color:#000000;transform:scaleX(0.9300);transform-origin:center;">0,00</div><div class="t" style="left:219.65px;top:301px;font-size:6.6px;line-height:6.6px;color:#000000;transform:scaleX(0.9300);transform-origin:center;">4 000,00</div><div class="t" style="left:268.08px;top:301px;font-size:6.6px;line-height:6.6px;color:#000000;transform:scaleX(0.9300);transform-origin:center;">0,00</div><div class="t" style="left:310.08px;top:301px;font-size:6.6px;line-height:6.6px;color:#000000;transform:scaleX(0.9300);transform-origin:center;">0,00</div><div class="t" style="left:352.08px;top:301px;font-size:6.6px;line-height:6.6px;color:#000000;transform:scaleX(0.9300);transform-origin:center;">0,00</div><div class="t" style="left:394.08px;top:301px;font-size:6.6px;line-height:6.6px;color:#000000;transform:scaleX(0.9300);transform-origin:center;">0,00</div><div class="t" style="left:436.08px;top:301px;font-size:6.6px;line-height:6.6px;color:#000000;transform:scaleX(0.9300);transform-origin:center;">0,00</div><div class="t" style="left:471.65px;top:301px;font-size:6.6px;line-height:6.6px;color:#000000;transform:scaleX(0.9300);transform-origin:center;">1 500,00</div><div class="t" style="left:520.08px;top:301px;font-size:6.6px;line-height:6.6px;color:#000000;transform:scaleX(0.9300);transform-origin:center;">0,00</div><div class="t" style="left:562.08px;top:301px;font-size:6.6px;line-height:6.6px;color:#000000;transform:scaleX(0.9300);transform-origin:center;">0,00</div><div class="t" style="left:616.08px;top:301px;font-size:6.6px;line-height:6.6px;color:#000000;transform:scaleX(0.9300);transform-origin:center;">0,00</div><div class="t" style="left:681.65px;top:301px;font-size:6.6px;line-height:6.6px;color:#000000;transform:scaleX(0.9300);transform-origin:center;">5 500,00</div><div class="t" style="left:2.20px;top:311px;font-size:6.6px;line-height:6.6px;color:#000000;transform:scaleX(0.9250);transform-origin:left;">Déplacements &amp; missions</div><div class="t" style="left:138.41px;top:311px;font-size:6.6px;line-height:6.6px;color:#000000;transform:scaleX(0.9300);transform-origin:center;">200,00</div><div class="t" style="left:180.41px;top:311px;font-size:6.6px;line-height:6.6px;color:#000000;transform:scaleX(0.9300);transform-origin:center;">200,00</div><div class="t" style="left:222.41px;top:311px;font-size:6.6px;line-height:6.6px;color:#000000;transform:scaleX(0.9300);transform-origin:center;">200,00</div><div class="t" style="left:264.41px;top:311px;font-size:6.6px;line-height:6.6px;color:#000000;transform:scaleX(0.9300);transform-origin:center;">200,00</div><div class="t" style="left:306.41px;top:311px;font-size:6.6px;line-height:6.6px;color:#000000;transform:scaleX(0.9300);transform-origin:center;">300,00</div><div class="t" style="left:348.41px;top:311px;font-size:6.6px;line-height:6.6px;color:#000000;transform:scaleX(0.9300);transform-origin:center;">800,00</div><div class="t" style="left:390.41px;top:311px;font-size:6.6px;line-height:6.6px;color:#000000;transform:scaleX(0.9300);transform-origin:center;">250,00</div><div class="t" style="left:432.41px;top:311px;font-size:6.6px;line-height:6.6px;color:#000000;transform:scaleX(0.9300);transform-origin:center;">200,00</div><div class="t" style="left:474.41px;top:311px;font-size:6.6px;line-height:6.6px;color:#000000;transform:scaleX(0.9300);transform-origin:center;">200,00</div><div class="t" style="left:516.41px;top:311px;font-size:6.6px;line-height:6.6px;color:#000000;transform:scaleX(0.9300);transform-origin:center;">250,00</div><div class="t" style="left:558.41px;top:311px;font-size:6.6px;line-height:6.6px;color:#000000;transform:scaleX(0.9300);transform-origin:center;">800,00</div><div class="t" style="left:612.41px;top:311px;font-size:6.6px;line-height:6.6px;color:#000000;transform:scaleX(0.9300);transform-origin:center;">200,00</div><div class="t" style="left:681.65px;top:311px;font-size:6.6px;line-height:6.6px;color:#000000;transform:scaleX(0.9300);transform-origin:center;">3 800,00</div><div class="t" style="left:2.20px;top:321px;font-size:6.6px;line-height:6.6px;color:#000000;transform:scaleX(0.9250);transform-origin:left;">Communication / événementiel</div><div class="t" style="left:138.41px;top:321px;font-size:6.6px;line-height:6.6px;color:#000000;transform:scaleX(0.9300);transform-origin:center;">300,00</div><div class="t" style="left:180.41px;top:321px;font-size:6.6px;line-height:6.6px;color:#000000;transform:scaleX(0.9300);transform-origin:center;">300,00</div><div class="t" style="left:222.41px;top:321px;font-size:6.6px;line-height:6.6px;color:#000000;transform:scaleX(0.9300);transform-origin:center;">300,00</div><div class="t" style="left:264.41px;top:321px;font-size:6.6px;line-height:6.6px;color:#000000;transform:scaleX(0.9300);transform-origin:center;">300,00</div><div class="t" style="left:303.65px;top:321px;font-size:6.6px;line-height:6.6px;color:#000000;transform:scaleX(0.9300);transform-origin:center;">1 200,00</div><div class="t" style="left:348.41px;top:321px;font-size:6.6px;line-height:6.6px;color:#000000;transform:scaleX(0.9300);transform-origin:center;">800,00</div><div class="t" style="left:390.41px;top:321px;font-size:6.6px;line-height:6.6px;color:#000000;transform:scaleX(0.9300);transform-origin:center;">300,00</div><div class="t" style="left:432.41px;top:321px;font-size:6.6px;line-height:6.6px;color:#000000;transform:scaleX(0.9300);transform-origin:center;">300,00</div><div class="t" style="left:474.41px;top:321px;font-size:6.6px;line-height:6.6px;color:#000000;transform:scaleX(0.9300);transform-origin:center;">300,00</div><div class="t" style="left:513.65px;top:321px;font-size:6.6px;line-height:6.6px;color:#000000;transform:scaleX(0.9300);transform-origin:center;">1 200,00</div><div class="t" style="left:558.41px;top:321px;font-size:6.6px;line-height:6.6px;color:#000000;transform:scaleX(0.9300);transform-origin:center;">900,00</div><div class="t" style="left:612.41px;top:321px;font-size:6.6px;line-height:6.6px;color:#000000;transform:scaleX(0.9300);transform-origin:center;">300,00</div><div class="t" style="left:681.65px;top:321px;font-size:6.6px;line-height:6.6px;color:#000000;transform:scaleX(0.9300);transform-origin:center;">6 500,00</div><div class="t" style="left:2.20px;top:331px;font-size:6.6px;line-height:6.6px;color:#000000;transform:scaleX(0.9250);transform-origin:left;">Frais bancaires</div><div class="t" style="left:140.24px;top:331px;font-size:6.6px;line-height:6.6px;color:#000000;transform:scaleX(0.9300);transform-origin:center;">25,00</div><div class="t" style="left:182.24px;top:331px;font-size:6.6px;line-height:6.6px;color:#000000;transform:scaleX(0.9300);transform-origin:center;">25,00</div><div class="t" style="left:224.24px;top:331px;font-size:6.6px;line-height:6.6px;color:#000000;transform:scaleX(0.9300);transform-origin:center;">25,00</div><div class="t" style="left:266.24px;top:331px;font-size:6.6px;line-height:6.6px;color:#000000;transform:scaleX(0.9300);transform-origin:center;">25,00</div><div class="t" style="left:308.24px;top:331px;font-size:6.6px;line-height:6.6px;color:#000000;transform:scaleX(0.9300);transform-origin:center;">25,00</div><div class="t" style="left:350.24px;top:331px;font-size:6.6px;line-height:6.6px;color:#000000;transform:scaleX(0.9300);transform-origin:center;">25,00</div><div class="t" style="left:392.24px;top:331px;font-size:6.6px;line-height:6.6px;color:#000000;transform:scaleX(0.9300);transform-origin:center;">25,00</div><div class="t" style="left:434.24px;top:331px;font-size:6.6px;line-height:6.6px;color:#000000;transform:scaleX(0.9300);transform-origin:center;">25,00</div><div class="t" style="left:476.24px;top:331px;font-size:6.6px;line-height:6.6px;color:#000000;transform:scaleX(0.9300);transform-origin:center;">25,00</div><div class="t" style="left:518.24px;top:331px;font-size:6.6px;line-height:6.6px;color:#000000;transform:scaleX(0.9300);transform-origin:center;">25,00</div><div class="t" style="left:560.24px;top:331px;font-size:6.6px;line-height:6.6px;color:#000000;transform:scaleX(0.9300);transform-origin:center;">25,00</div><div class="t" style="left:614.24px;top:331px;font-size:6.6px;line-height:6.6px;color:#000000;transform:scaleX(0.9300);transform-origin:center;">25,00</div><div class="t" style="left:684.41px;top:331px;font-size:6.6px;line-height:6.6px;color:#000000;transform:scaleX(0.9300);transform-origin:center;">300,00</div><div class="t" style="left:2.20px;top:341px;font-size:6.6px;line-height:6.6px;color:#000000;transform:scaleX(0.9250);transform-origin:left;">Impôts &amp; taxes</div><div class="t" style="left:142.08px;top:341px;font-size:6.6px;line-height:6.6px;color:#000000;transform:scaleX(0.9300);transform-origin:center;">0,00</div><div class="t" style="left:184.08px;top:341px;font-size:6.6px;line-height:6.6px;color:#000000;transform:scaleX(0.9300);transform-origin:center;">0,00</div><div class="t" style="left:226.08px;top:341px;font-size:6.6px;line-height:6.6px;color:#000000;transform:scaleX(0.9300);transform-origin:center;">0,00</div><div class="t" style="left:268.08px;top:341px;font-size:6.6px;line-height:6.6px;color:#000000;transform:scaleX(0.9300);transform-origin:center;">0,00</div><div class="t" style="left:310.08px;top:341px;font-size:6.6px;line-height:6.6px;color:#000000;transform:scaleX(0.9300);transform-origin:center;">0,00</div><div class="t" style="left:352.08px;top:341px;font-size:6.6px;line-height:6.6px;color:#000000;transform:scaleX(0.9300);transform-origin:center;">0,00</div><div class="t" style="left:394.08px;top:341px;font-size:6.6px;line-height:6.6px;color:#000000;transform:scaleX(0.9300);transform-origin:center;">0,00</div><div class="t" style="left:436.08px;top:341px;font-size:6.6px;line-height:6.6px;color:#000000;transform:scaleX(0.9300);transform-origin:center;">0,00</div><div class="t" style="left:478.08px;top:341px;font-size:6.6px;line-height:6.6px;color:#000000;transform:scaleX(0.9300);transform-origin:center;">0,00</div><div class="t" style="left:520.08px;top:341px;font-size:6.6px;line-height:6.6px;color:#000000;transform:scaleX(0.9300);transform-origin:center;">0,00</div><div class="t" style="left:562.08px;top:341px;font-size:6.6px;line-height:6.6px;color:#000000;transform:scaleX(0.9300);transform-origin:center;">0,00</div><div class="t" style="left:612.41px;top:341px;font-size:6.6px;line-height:6.6px;color:#000000;transform:scaleX(0.9300);transform-origin:center;">400,00</div><div class="t" style="left:684.41px;top:341px;font-size:6.6px;line-height:6.6px;color:#000000;transform:scaleX(0.9300);transform-origin:center;">400,00</div><div class="t" style="left:2.20px;top:351px;font-size:6.6px;line-height:6.6px;color:#000000;transform:scaleX(0.9250);transform-origin:left;">Subventions reversées / aides</div><div class="t" style="left:142.08px;top:351px;font-size:6.6px;line-height:6.6px;color:#000000;transform:scaleX(0.9300);transform-origin:center;">0,00</div><div class="t" style="left:184.08px;top:351px;font-size:6.6px;line-height:6.6px;color:#000000;transform:scaleX(0.9300);transform-origin:center;">0,00</div><div class="t" style="left:226.08px;top:351px;font-size:6.6px;line-height:6.6px;color:#000000;transform:scaleX(0.9300);transform-origin:center;">0,00</div><div class="t" style="left:268.08px;top:351px;font-size:6.6px;line-height:6.6px;color:#000000;transform:scaleX(0.9300);transform-origin:center;">0,00</div><div class="t" style="left:310.08px;top:351px;font-size:6.6px;line-height:6.6px;color:#000000;transform:scaleX(0.9300);transform-origin:center;">0,00</div><div class="t" style="left:352.08px;top:351px;font-size:6.6px;line-height:6.6px;color:#000000;transform:scaleX(0.9300);transform-origin:center;">0,00</div><div class="t" style="left:390.41px;top:351px;font-size:6.6px;line-height:6.6px;color:#000000;transform:scaleX(0.9300);transform-origin:center;">500,00</div><div class="t" style="left:436.08px;top:351px;font-size:6.6px;line-height:6.6px;color:#000000;transform:scaleX(0.9300);transform-origin:center;">0,00</div><div class="t" style="left:478.08px;top:351px;font-size:6.6px;line-height:6.6px;color:#000000;transform:scaleX(0.9300);transform-origin:center;">0,00</div><div class="t" style="left:520.08px;top:351px;font-size:6.6px;line-height:6.6px;color:#000000;transform:scaleX(0.9300);transform-origin:center;">0,00</div><div class="t" style="left:562.08px;top:351px;font-size:6.6px;line-height:6.6px;color:#000000;transform:scaleX(0.9300);transform-origin:center;">0,00</div><div class="t" style="left:612.41px;top:351px;font-size:6.6px;line-height:6.6px;color:#000000;transform:scaleX(0.9300);transform-origin:center;">500,00</div><div class="t" style="left:681.65px;top:351px;font-size:6.6px;line-height:6.6px;color:#000000;transform:scaleX(0.9300);transform-origin:center;">1 000,00</div><div class="t" style="left:2.20px;top:361px;font-size:6.6px;line-height:6.6px;color:#000000;transform:scaleX(0.9250);transform-origin:left;">Remboursements / indemnités</div><div class="t" style="left:138.41px;top:361px;font-size:6.6px;line-height:6.6px;color:#000000;transform:scaleX(0.9300);transform-origin:center;">100,00</div><div class="t" style="left:180.41px;top:361px;font-size:6.6px;line-height:6.6px;color:#000000;transform:scaleX(0.9300);transform-origin:center;">100,00</div><div class="t" style="left:222.41px;top:361px;font-size:6.6px;line-height:6.6px;color:#000000;transform:scaleX(0.9300);transform-origin:center;">100,00</div><div class="t" style="left:264.41px;top:361px;font-size:6.6px;line-height:6.6px;color:#000000;transform:scaleX(0.9300);transform-origin:center;">100,00</div><div class="t" style="left:306.41px;top:361px;font-size:6.6px;line-height:6.6px;color:#000000;transform:scaleX(0.9300);transform-origin:center;">100,00</div><div class="t" style="left:348.41px;top:361px;font-size:6.6px;line-height:6.6px;color:#000000;transform:scaleX(0.9300);transform-origin:center;">100,00</div><div class="t" style="left:390.41px;top:361px;font-size:6.6px;line-height:6.6px;color:#000000;transform:scaleX(0.9300);transform-origin:center;">100,00</div><div class="t" style="left:432.41px;top:361px;font-size:6.6px;line-height:6.6px;color:#000000;transform:scaleX(0.9300);transform-origin:center;">100,00</div><div class="t" style="left:474.41px;top:361px;font-size:6.6px;line-height:6.6px;color:#000000;transform:scaleX(0.9300);transform-origin:center;">100,00</div><div class="t" style="left:516.41px;top:361px;font-size:6.6px;line-height:6.6px;color:#000000;transform:scaleX(0.9300);transform-origin:center;">100,00</div><div class="t" style="left:558.41px;top:361px;font-size:6.6px;line-height:6.6px;color:#000000;transform:scaleX(0.9300);transform-origin:center;">100,00</div><div class="t" style="left:612.41px;top:361px;font-size:6.6px;line-height:6.6px;color:#000000;transform:scaleX(0.9300);transform-origin:center;">100,00</div><div class="t" style="left:681.65px;top:361px;font-size:6.6px;line-height:6.6px;color:#000000;transform:scaleX(0.9300);transform-origin:center;">1 200,00</div><div class="t" style="left:2.20px;top:371px;font-size:6.6px;line-height:6.6px;color:#000000;transform:scaleX(0.9250);transform-origin:left;">Autres charges</div><div class="t" style="left:138.41px;top:371px;font-size:6.6px;line-height:6.6px;color:#000000;transform:scaleX(0.9300);transform-origin:center;">150,00</div><div class="t" style="left:180.41px;top:371px;font-size:6.6px;line-height:6.6px;color:#000000;transform:scaleX(0.9300);transform-origin:center;">150,00</div><div class="t" style="left:222.41px;top:371px;font-size:6.6px;line-height:6.6px;color:#000000;transform:scaleX(0.9300);transform-origin:center;">150,00</div><div class="t" style="left:264.41px;top:371px;font-size:6.6px;line-height:6.6px;color:#000000;transform:scaleX(0.9300);transform-origin:center;">150,00</div><div class="t" style="left:306.41px;top:371px;font-size:6.6px;line-height:6.6px;color:#000000;transform:scaleX(0.9300);transform-origin:center;">150,00</div><div class="t" style="left:348.41px;top:371px;font-size:6.6px;line-height:6.6px;color:#000000;transform:scaleX(0.9300);transform-origin:center;">150,00</div><div class="t" style="left:390.41px;top:371px;font-size:6.6px;line-height:6.6px;color:#000000;transform:scaleX(0.9300);transform-origin:center;">150,00</div><div class="t" style="left:432.41px;top:371px;font-size:6.6px;line-height:6.6px;color:#000000;transform:scaleX(0.9300);transform-origin:center;">150,00</div><div class="t" style="left:474.41px;top:371px;font-size:6.6px;line-height:6.6px;color:#000000;transform:scaleX(0.9300);transform-origin:center;">150,00</div><div class="t" style="left:516.41px;top:371px;font-size:6.6px;line-height:6.6px;color:#000000;transform:scaleX(0.9300);transform-origin:center;">150,00</div><div class="t" style="left:558.41px;top:371px;font-size:6.6px;line-height:6.6px;color:#000000;transform:scaleX(0.9300);transform-origin:center;">150,00</div><div class="t" style="left:612.41px;top:371px;font-size:6.6px;line-height:6.6px;color:#000000;transform:scaleX(0.9300);transform-origin:center;">150,00</div><div class="t" style="left:681.65px;top:371px;font-size:6.6px;line-height:6.6px;color:#000000;transform:scaleX(0.9300);transform-origin:center;">1 800,00</div><div class="t" style="left:3.00px;top:190px;font-size:10.97px;line-height:10.97px;font-weight:bold;color:#0b4b58;transform:scaleX(0.8730);transform-origin:left;">TOTAL ENCAISSEMENTS</div><div class="t" style="left:3.00px;top:383px;font-size:10.29px;line-height:10.29px;font-weight:bold;color:#0b4b58;transform:scaleX(0.9227);transform-origin:left;">TOTAL DÉCAISSEMENTS</div><div class="t" style="left:130.92px;top:198px;font-size:8.23px;line-height:8.23px;font-weight:bold;color:#111111;">11 720,00</div><div class="t" style="left:172.69px;top:198px;font-size:8.23px;line-height:8.23px;font-weight:bold;color:#111111;">18 620,00</div><div class="t" style="left:214.69px;top:198px;font-size:8.23px;line-height:8.23px;font-weight:bold;color:#111111;">24 420,00</div><div class="t" style="left:256.69px;top:198px;font-size:8.23px;line-height:8.23px;font-weight:bold;color:#111111;">14 420,00</div><div class="t" style="left:300.98px;top:198px;font-size:8.23px;line-height:8.23px;font-weight:bold;color:#111111;">5 020,00</div><div class="t" style="left:340.92px;top:198px;font-size:8.23px;line-height:8.23px;font-weight:bold;color:#111111;">11 020,00</div><div class="t" style="left:382.69px;top:198px;font-size:8.23px;line-height:8.23px;font-weight:bold;color:#111111;">12 220,00</div><div class="t" style="left:426.98px;top:198px;font-size:8.23px;line-height:8.23px;font-weight:bold;color:#111111;">4 720,00</div><div class="t" style="left:468.98px;top:198px;font-size:8.23px;line-height:8.23px;font-weight:bold;color:#111111;">9 520,00</div><div class="t" style="left:508.69px;top:198px;font-size:8.23px;line-height:8.23px;font-weight:bold;color:#111111;">19 720,00</div><div class="t" style="left:550.92px;top:198px;font-size:8.23px;line-height:8.23px;font-weight:bold;color:#111111;">11 920,00</div><div class="t" style="left:606.98px;top:198px;font-size:8.23px;line-height:8.23px;font-weight:bold;color:#111111;">7 320,00</div><div class="t" style="left:674.40px;top:198px;font-size:8.23px;line-height:8.23px;font-weight:bold;color:#111111;">150 640,00</div><div class="t" style="left:132.98px;top:388px;font-size:8.23px;line-height:8.23px;font-weight:bold;color:#111111;">7 875,00</div><div class="t" style="left:174.98px;top:388px;font-size:8.23px;line-height:8.23px;font-weight:bold;color:#111111;">6 675,00</div><div class="t" style="left:214.69px;top:388px;font-size:8.23px;line-height:8.23px;font-weight:bold;color:#111111;">10 675,00</div><div class="t" style="left:258.98px;top:388px;font-size:8.23px;line-height:8.23px;font-weight:bold;color:#111111;">6 675,00</div><div class="t" style="left:300.98px;top:388px;font-size:8.23px;line-height:8.23px;font-weight:bold;color:#111111;">7 675,00</div><div class="t" style="left:342.98px;top:388px;font-size:8.23px;line-height:8.23px;font-weight:bold;color:#111111;">7 775,00</div><div class="t" style="left:384.98px;top:388px;font-size:8.23px;line-height:8.23px;font-weight:bold;color:#111111;">7 225,00</div><div class="t" style="left:426.98px;top:388px;font-size:8.23px;line-height:8.23px;font-weight:bold;color:#111111;">6 675,00</div><div class="t" style="left:468.98px;top:388px;font-size:8.23px;line-height:8.23px;font-weight:bold;color:#111111;">8 175,00</div><div class="t" style="left:510.98px;top:388px;font-size:8.23px;line-height:8.23px;font-weight:bold;color:#111111;">7 625,00</div><div class="t" style="left:552.98px;top:388px;font-size:8.23px;line-height:8.23px;font-weight:bold;color:#111111;">7 875,00</div><div class="t" style="left:606.98px;top:388px;font-size:8.23px;line-height:8.23px;font-weight:bold;color:#111111;">7 575,00</div><div class="t" style="left:676.69px;top:388px;font-size:8.23px;line-height:8.23px;font-weight:bold;color:#111111;">92 500,00</div><div class="t" style="left:3.00px;top:412px;font-size:9.0px;line-height:9.0px;font-weight:bold;color:#0b4b58;transform:scaleX(0.9130);transform-origin:left;-webkit-text-stroke:0.15px #0b4b58;">SYNTHÈSE TRÉSORERIE</div><div class="t" style="left:3.00px;top:424px;font-size:9.6px;line-height:9.6px;font-weight:bold;color:#111111;transform:scaleX(0.9559);transform-origin:left;">Trésorerie initiale</div><div class="t" style="left:3.00px;top:436px;font-size:10.97px;line-height:10.97px;font-weight:bold;color:#111111;transform:scaleX(0.9303);transform-origin:left;">Flux net (enc.-déc.)</div><div class="t" style="left:3.00px;top:452px;font-size:9.6px;line-height:9.6px;font-weight:bold;color:#111111;transform:scaleX(0.9438);transform-origin:left;">Trésorerie finale</div><div class="t" style="left:133.82px;top:426px;font-size:6.6px;line-height:6.6px;color:#000000;transform:scaleX(0.9300);transform-origin:center;">25 000,00</div><div class="t" style="left:175.82px;top:426px;font-size:6.6px;line-height:6.6px;color:#000000;transform:scaleX(0.9300);transform-origin:center;">28 845,00</div><div class="t" style="left:217.82px;top:426px;font-size:6.6px;line-height:6.6px;color:#000000;transform:scaleX(0.9300);transform-origin:center;">40 790,00</div><div class="t" style="left:259.82px;top:426px;font-size:6.6px;line-height:6.6px;color:#000000;transform:scaleX(0.9300);transform-origin:center;">54 535,00</div><div class="t" style="left:301.82px;top:426px;font-size:6.6px;line-height:6.6px;color:#000000;transform:scaleX(0.9300);transform-origin:center;">62 280,00</div><div class="t" style="left:343.82px;top:426px;font-size:6.6px;line-height:6.6px;color:#000000;transform:scaleX(0.9300);transform-origin:center;">59 625,00</div><div class="t" style="left:385.82px;top:426px;font-size:6.6px;line-height:6.6px;color:#000000;transform:scaleX(0.9300);transform-origin:center;">62 870,00</div><div class="t" style="left:427.82px;top:426px;font-size:6.6px;line-height:6.6px;color:#000000;transform:scaleX(0.9300);transform-origin:center;">67 865,00</div><div class="t" style="left:469.82px;top:426px;font-size:6.6px;line-height:6.6px;color:#000000;transform:scaleX(0.9300);transform-origin:center;">65 910,00</div><div class="t" style="left:511.82px;top:426px;font-size:6.6px;line-height:6.6px;color:#000000;transform:scaleX(0.9300);transform-origin:center;">67 255,00</div><div class="t" style="left:553.82px;top:426px;font-size:6.6px;line-height:6.6px;color:#000000;transform:scaleX(0.9300);transform-origin:center;">79 350,00</div><div class="t" style="left:607.82px;top:426px;font-size:6.6px;line-height:6.6px;color:#000000;transform:scaleX(0.9300);transform-origin:center;">83 395,00</div><div class="t" style="left:135.65px;top:438px;font-size:6.6px;line-height:6.6px;color:#000000;transform:scaleX(0.9300);transform-origin:center;">3 845,00</div><div class="t" style="left:176.06px;top:438px;font-size:6.6px;line-height:6.6px;color:#000000;transform:scaleX(0.9300);transform-origin:center;">11 945,00</div><div class="t" style="left:217.82px;top:438px;font-size:6.6px;line-height:6.6px;color:#000000;transform:scaleX(0.9300);transform-origin:center;">13 745,00</div><div class="t" style="left:261.65px;top:438px;font-size:6.6px;line-height:6.6px;color:#000000;transform:scaleX(0.9300);transform-origin:center;">7 745,00</div><div class="t" style="left:302.56px;top:438px;font-size:6.6px;line-height:6.6px;color:#000000;transform:scaleX(0.9300);transform-origin:center;">-2 655,00</div><div class="t" style="left:345.65px;top:438px;font-size:6.6px;line-height:6.6px;color:#000000;transform:scaleX(0.9300);transform-origin:center;">3 245,00</div><div class="t" style="left:387.65px;top:438px;font-size:6.6px;line-height:6.6px;color:#000000;transform:scaleX(0.9300);transform-origin:center;">4 995,00</div><div class="t" style="left:428.56px;top:438px;font-size:6.6px;line-height:6.6px;color:#000000;transform:scaleX(0.9300);transform-origin:center;">-1 955,00</div><div class="t" style="left:471.65px;top:438px;font-size:6.6px;line-height:6.6px;color:#000000;transform:scaleX(0.9300);transform-origin:center;">1 345,00</div><div class="t" style="left:511.82px;top:438px;font-size:6.6px;line-height:6.6px;color:#000000;transform:scaleX(0.9300);transform-origin:center;">12 095,00</div><div class="t" style="left:555.65px;top:438px;font-size:6.6px;line-height:6.6px;color:#000000;transform:scaleX(0.9300);transform-origin:center;">4 045,00</div><div class="t" style="left:611.31px;top:438px;font-size:6.6px;line-height:6.6px;color:#000000;transform:scaleX(0.9300);transform-origin:center;">-255,00</div><div class="t" style="left:133.82px;top:453px;font-size:6.6px;line-height:6.6px;color:#000000;transform:scaleX(0.9300);transform-origin:center;">28 845,00</div><div class="t" style="left:175.82px;top:453px;font-size:6.6px;line-height:6.6px;color:#000000;transform:scaleX(0.9300);transform-origin:center;">40 790,00</div><div class="t" style="left:217.82px;top:453px;font-size:6.6px;line-height:6.6px;color:#000000;transform:scaleX(0.9300);transform-origin:center;">54 535,00</div><div class="t" style="left:259.82px;top:453px;font-size:6.6px;line-height:6.6px;color:#000000;transform:scaleX(0.9300);transform-origin:center;">62 280,00</div><div class="t" style="left:301.82px;top:453px;font-size:6.6px;line-height:6.6px;color:#000000;transform:scaleX(0.9300);transform-origin:center;">59 625,00</div><div class="t" style="left:343.82px;top:453px;font-size:6.6px;line-height:6.6px;color:#000000;transform:scaleX(0.9300);transform-origin:center;">62 870,00</div><div class="t" style="left:385.82px;top:453px;font-size:6.6px;line-height:6.6px;color:#000000;transform:scaleX(0.9300);transform-origin:center;">67 865,00</div><div class="t" style="left:427.82px;top:453px;font-size:6.6px;line-height:6.6px;color:#000000;transform:scaleX(0.9300);transform-origin:center;">65 910,00</div><div class="t" style="left:469.82px;top:453px;font-size:6.6px;line-height:6.6px;color:#000000;transform:scaleX(0.9300);transform-origin:center;">67 255,00</div><div class="t" style="left:511.82px;top:453px;font-size:6.6px;line-height:6.6px;color:#000000;transform:scaleX(0.9300);transform-origin:center;">79 350,00</div><div class="t" style="left:553.82px;top:453px;font-size:6.6px;line-height:6.6px;color:#000000;transform:scaleX(0.9300);transform-origin:center;">83 395,00</div><div class="t" style="left:607.82px;top:453px;font-size:6.6px;line-height:6.6px;color:#000000;transform:scaleX(0.9300);transform-origin:center;">83 140,00</div><div class="t" style="left:679.23px;top:427px;font-size:6.3px;line-height:6.3px;font-weight:bold;color:#111111;transform:scaleX(0.9514);transform-origin:center;">697 720,00</div><div class="t" style="left:680.49px;top:440px;font-size:6.3px;line-height:6.3px;font-weight:bold;color:#111111;">58 140,00</div><div class="t" style="left:679.23px;top:456px;font-size:6.3px;line-height:6.3px;font-weight:bold;color:#111111;transform:scaleX(0.9514);transform-origin:center;">755 860,00</div><div style="left:2px;top:72px;width:1px;height:401px;background:#d6d6d6;"></div><div style="left:127px;top:0px;width:1px;height:473px;background:rgba(30,125,235,0.65);"></div><div style="left:2px;top:71px;width:734px;height:1px;background:rgba(30,125,235,0.65);"></div>
</div></body></html>
